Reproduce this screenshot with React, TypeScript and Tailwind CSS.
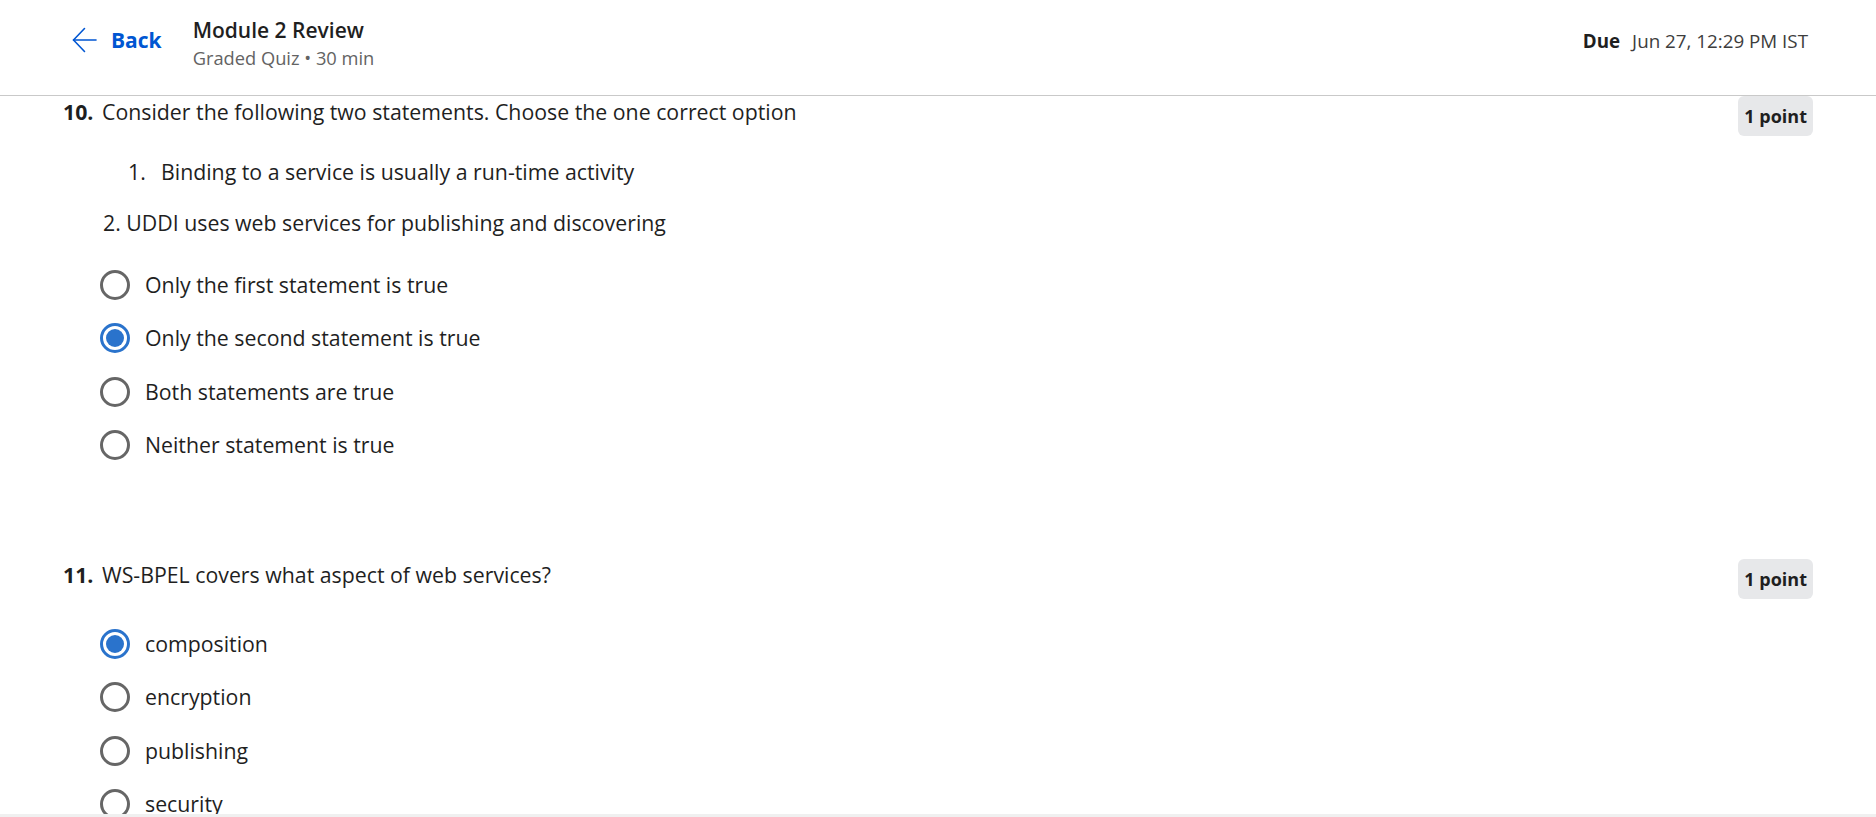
type Question = {
  num: string;
  text: string;
  options: string[];
  selected: number;
};

const q10: Question = {
  num: '10.',
  text: 'Consider the following two statements. Choose the one correct option',
  options: [
    'Only the first statement is true',
    'Only the second statement is true',
    'Both statements are true',
    'Neither statement is true',
  ],
  selected: 1,
};

const q11: Question = {
  num: '11.',
  text: 'WS-BPEL covers what aspect of web services?',
  options: ['composition', 'encryption', 'publishing', 'security'],
  selected: 0,
};

function BackArrow() {
  return (
    <svg width="25" height="26" viewBox="0 0 25 26" fill="none" stroke="currentColor" strokeWidth="1.6" strokeLinecap="round" strokeLinejoin="round">
      <path d="M24 13H1.5" />
      <path d="M12.5 1.5 1.5 13l11 11.5" />
    </svg>
  );
}

function Radio({ checked }: { checked?: boolean }) {
  if (checked) {
    return (
      <span className="flex h-[30px] w-[30px] shrink-0 items-center justify-center rounded-full border-[3px] border-[#2a73cc]">
        <span className="h-[18px] w-[18px] rounded-full bg-[#2a73cc]" />
      </span>
    );
  }
  return <span className="h-[30px] w-[30px] shrink-0 rounded-full border-[3px] border-[#666666]" />;
}

function QuestionHead({ num, text }: { num: string; text: string }) {
  return (
    <div className="flex items-start justify-between">
      <p className="flex text-[21.3px] leading-[32px] text-[#1f1f1f]">
        <span className="w-[39px] shrink-0 font-bold">{num}</span>
        <span>{text}</span>
      </p>
      <span className="flex h-[40px] items-center rounded-[6px] bg-[#e7e8ea] px-[6px] text-[18px] font-bold text-[#1f1f1f]">
        1 point
      </span>
    </div>
  );
}

function Options({ q }: { q: Question }) {
  return (
    <div className="flex flex-col">
      {q.options.map((opt, i) => (
        <label key={i} className="flex h-[53.5px] items-center gap-[15px] pl-[37px] text-[21.3px] text-[#1f1f1f]">
          <Radio checked={i === q.selected} />
          <span>{opt}</span>
        </label>
      ))}
    </div>
  );
}

export default function App() {
  return (
    <div className="flex h-[817px] w-full flex-col overflow-hidden bg-white font-['Open_Sans',sans-serif] text-[#1f1f1f]">
      <header className="flex h-[96px] shrink-0 items-start border-b border-[#c9c9c9] pl-[72px] pr-[68px] pt-[16px]">
        <a className="mt-[10px] flex h-[28px] items-center gap-[14px] text-[#0056d2]">
          <BackArrow />
          <span className="text-[21px] font-bold leading-[28px]">Back</span>
        </a>
        <div className="ml-[31px] flex flex-col">
          <span className="text-[21px] font-semibold leading-[28px] text-[#1f1f1f]">Module 2 Review</span>
          <span className="text-[18.3px] leading-[28px] text-[#636363]">Graded Quiz • 30 min</span>
        </div>
        <div className="ml-auto mt-[11px] flex h-[28px] items-center gap-[12px] text-[18.8px]">
          <span className="font-bold text-[#1f1f1f]">Due</span>
          <span className="text-[#3d3d3d]">Jun 27, 12:29 PM IST</span>
        </div>
      </header>

      <main className="flex-1 overflow-hidden px-[63px]">
        <section>
          <QuestionHead num={q10.num} text={q10.text} />
          <div className="mt-[20px] text-[21.3px] leading-[32px]">
            <div className="flex pl-[65px]">
              <span className="w-[33px] shrink-0">1.</span>
              <span>Binding to a service is usually a run-time activity</span>
            </div>
            <p className="mt-[19px] pl-[40px]">2. UDDI uses web services for publishing and discovering</p>
          </div>
          <div className="mt-[19px]">
            <Options q={q10} />
          </div>
        </section>

        <section className="mt-[87px]">
          <QuestionHead num={q11.num} text={q11.text} />
          <div className="mt-[18px]">
            <Options q={q11} />
          </div>
        </section>
      </main>
      <div className="h-[3px] shrink-0 bg-[#f0f0f0]" />
    </div>
  );
}
